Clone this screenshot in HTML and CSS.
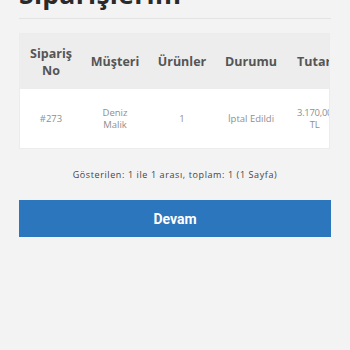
FILE: index.html
```html
<!DOCTYPE html>
<html lang="tr">
<head>
<meta charset="utf-8">
<link rel="stylesheet" href="styles.css">
</head>
<body>
<div class="page">
  <h1 class="title">Siparişlerim</h1>
  <div class="table-wrap">
    <div class="table">
      <div class="row head">
        <div class="cell">Sipariş<br>No</div>
        <div class="cell">Müşteri</div>
        <div class="cell">Ürünler</div>
        <div class="cell">Durumu</div>
        <div class="cell">Tutarı</div>
      </div>
      <div class="row body">
        <div class="cell">#273</div>
        <div class="cell">Deniz<br>Malik</div>
        <div class="cell">1</div>
        <div class="cell">İptal Edildi</div>
        <div class="cell"><span class="amount">3.170,00<br>TL</span></div>
      </div>
    </div>
  </div>
  <p class="pager">Gösterilen: 1 ile 1 arası, toplam: 1 (1 Sayfa)</p>
  <button class="btn">Devam</button>
</div>
</body>
</html>
```
FILE: styles.css
```css
html, body {
  margin: 0;
  padding: 0;
  background: #f3f3f3;
  font-family: "Open Sans", "DejaVu Sans", sans-serif;
}
.page {
  padding: 0 19px 0 19px;
  overflow: hidden;
  height: 350px;
}
.title {
  margin: -24px 0 0 0;
  font-size: 26.5px;
  line-height: 36px;
  font-weight: 700;
  color: #2a2a2a;
  padding-bottom: 6px;
  border-bottom: 1px solid #e3e3e3;
  letter-spacing: 0.3px;
}
.table-wrap {
  margin-top: 14px;
  width: 311px;
  overflow: hidden;
  border: 1px solid #ececec;
  box-sizing: border-box;
}
.table {
  width: 340px;
}
.row {
  display: grid;
  grid-template-columns: 62px 66px 68px 70px 74px;
  align-items: center;
  text-align: center;
}
.head {
  background: #ededed;
  height: 55px;
  font-weight: 700;
  font-size: 12.5px;
  line-height: 17px;
  color: #555;
}
.body {
  background: #fff;
  height: 59px;
  font-size: 9.5px;
  line-height: 12px;
  color: #8f8f8f;
}
.head .cell:last-child {
  text-align: left;
  padding-left: 11px;
}
.body .cell:last-child {
  text-align: left;
  padding-left: 11px;
}
.amount {
  display: inline-block;
  text-align: center;
  letter-spacing: -0.3px;
}
.pager {
  margin: 19px 0 0 0;
  text-align: center;
  font-size: 9px;
  line-height: 14px;
  letter-spacing: 0.6px;
  color: #444;
}
.btn {
  display: block;
  margin-top: 18px;
  width: 312px;
  height: 37px;
  border: 0;
  background: #2b76bd;
  color: #fff;
  font-family: Roboto, "Liberation Sans", sans-serif;
  font-weight: 700;
  font-size: 14px;
  padding: 0;
}
```
